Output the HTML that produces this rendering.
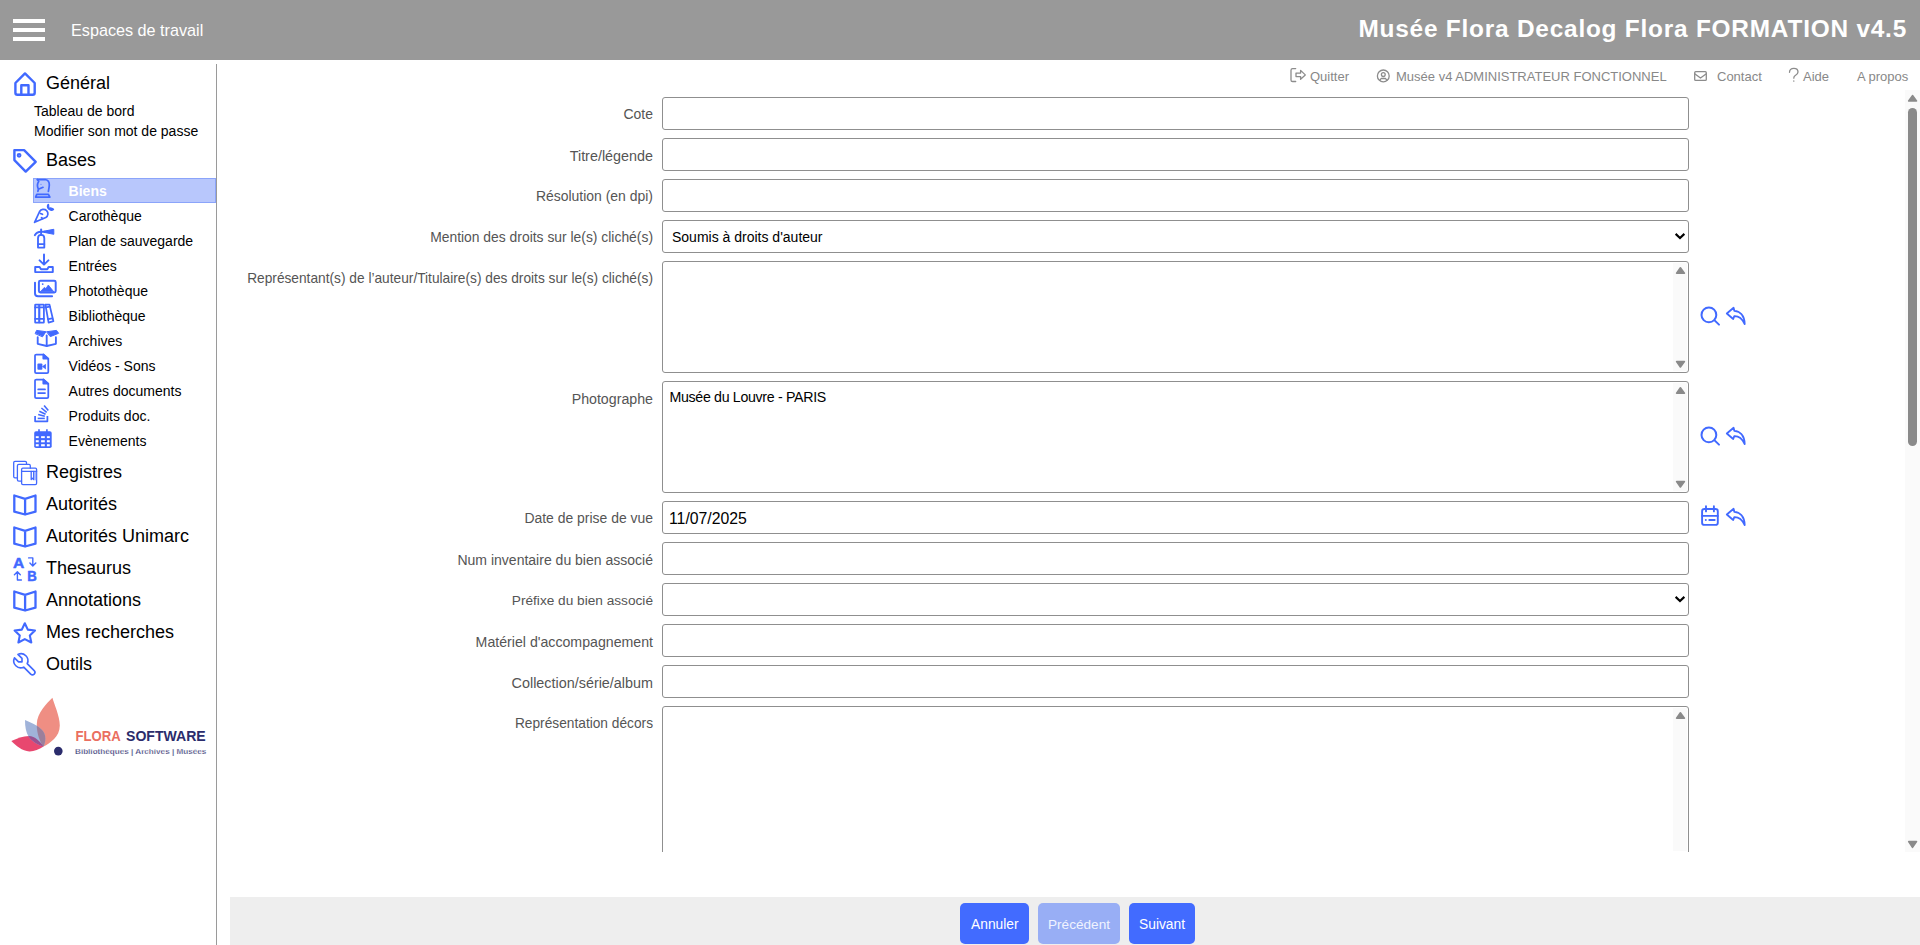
<!DOCTYPE html>
<html><head><meta charset="utf-8">
<style>
*{box-sizing:border-box}
html,body{margin:0;padding:0;width:1920px;height:945px;overflow:hidden;background:#fff;font-family:"Liberation Sans",sans-serif}
.a{position:absolute;white-space:nowrap;line-height:1}
#hdr{position:absolute;left:0;top:0;width:1920px;height:60px;background:#999}
.bar{position:absolute;left:13px;width:32px;height:4px;background:#fff}
#side{position:absolute;left:216px;top:64px;width:1px;height:881px;background:#9a9a9a}
.sec{font-size:18px;color:#000}
.sub{font-size:14px;color:#000}
.ic{position:absolute;overflow:visible}
.lbl{position:absolute;right:1267px;font-size:13.8px;color:#555;line-height:1;white-space:nowrap}
.inp{position:absolute;left:662px;width:1027px;height:33px;border:1px solid #8f8f8f;border-radius:3px;background:#fff}
.ta{height:112px}
.sb{position:absolute;right:0;top:0;width:15px;bottom:0;background:#fafafa}
.tri-up{position:absolute;left:3px;width:0;height:0;border-left:4.5px solid transparent;border-right:4.5px solid transparent;border-bottom:5px solid #8a8a8a}
.tri-dn{position:absolute;left:3px;width:0;height:0;border-left:4.5px solid transparent;border-right:4.5px solid transparent;border-top:5px solid #8a8a8a}
.val{position:absolute;font-size:14px;color:#000;line-height:1;white-space:nowrap}
.lnk{font-size:13px;color:#888}
#foot{position:absolute;left:230px;top:897px;width:1690px;height:48px;background:#eee}
.btn{position:absolute;top:903px;height:41px;border-radius:5px;background:#426bff;color:#fff;font-size:13.8px}
.btn span{position:absolute;line-height:1;white-space:nowrap}
</style></head><body>
<div id="hdr">
  <div class="bar" style="top:19px"></div>
  <div class="bar" style="top:28px"></div>
  <div class="bar" style="top:37px"></div>
  <div class="a" style="left:71px;top:22.2px;font-size:16.2px;color:#fff">Espaces de travail</div>
  <div class="a" style="left:1358.5px;top:17.2px;font-size:24.4px;letter-spacing:0.78px;font-weight:bold;color:#fff">Musée Flora Decalog Flora FORMATION v4.5</div>
</div>
<div id="side"></div>

<!-- sidebar -->
<div class="a sec" style="left:46px;top:74px">Général</div>
<div class="a sub" style="left:34px;top:104px">Tableau de bord</div>
<div class="a sub" style="left:34px;top:124px">Modifier son mot de passe</div>
<div class="a sec" style="left:46px;top:151px">Bases</div>
<div style="position:absolute;left:33px;top:178px;width:183px;height:25px;background:#b8c7fc;border:1px solid #8ba4fa"></div>
<div class="a sub" style="left:68.6px;top:184px;color:#fff;font-weight:bold">Biens</div>
<div class="a sub" style="left:68.6px;top:209px">Carothèque</div>
<div class="a sub" style="left:68.6px;top:234px">Plan de sauvegarde</div>
<div class="a sub" style="left:68.6px;top:259px">Entrées</div>
<div class="a sub" style="left:68.6px;top:284px">Photothèque</div>
<div class="a sub" style="left:68.6px;top:309px">Bibliothèque</div>
<div class="a sub" style="left:68.6px;top:334px">Archives</div>
<div class="a sub" style="left:68.6px;top:359px">Vidéos - Sons</div>
<div class="a sub" style="left:68.6px;top:384px">Autres documents</div>
<div class="a sub" style="left:68.6px;top:409px">Produits doc.</div>
<div class="a sub" style="left:68.6px;top:434px">Evènements</div>
<div class="a sec" style="left:46px;top:463px">Registres</div>
<div class="a sec" style="left:46px;top:495px">Autorités</div>
<div class="a sec" style="left:46px;top:527px">Autorités Unimarc</div>
<div class="a sec" style="left:46px;top:559px">Thesaurus</div>
<div class="a sec" style="left:46px;top:591px">Annotations</div>
<div class="a sec" style="left:46px;top:623px">Mes recherches</div>
<div class="a sec" style="left:46px;top:655px">Outils</div>

<!-- top links -->
<div class="a lnk" style="left:1310px;top:70px">Quitter</div>
<div class="a lnk" style="left:1396px;top:70px">Musée v4 ADMINISTRATEUR FONCTIONNEL</div>
<div class="a lnk" style="left:1717px;top:70px">Contact</div>
<div class="a lnk" style="left:1803px;top:70px">Aide</div>
<div class="a lnk" style="left:1857px;top:70px">A propos</div>

<!-- form -->
<div class="lbl" style="top:108px;font-size:13.95px">Cote</div>
<div class="inp" style="top:97px"></div>
<div class="lbl" style="top:149px;font-size:14.36px">Titre/légende</div>
<div class="inp" style="top:138px"></div>
<div class="lbl" style="top:190px;font-size:13.96px">Résolution (en dpi)</div>
<div class="inp" style="top:179px"></div>
<div class="lbl" style="top:231px;font-size:13.88px">Mention des droits sur le(s) cliché(s)</div>
<div class="inp" style="top:220px"></div>
<div class="val" style="left:672px;top:230px">Soumis à droits d'auteur</div>
<div class="lbl" style="top:272px;font-size:13.72px">Représentant(s) de l’auteur/Titulaire(s) des droits sur le(s) cliché(s)</div>
<div class="inp ta" style="top:261px"></div>
<div class="lbl" style="top:392px;font-size:14.21px">Photographe</div>
<div class="inp ta" style="top:381px"></div>
<div class="val" style="left:669.5px;top:390px;font-size:14.2px;letter-spacing:-0.32px">Musée du Louvre - PARIS</div>
<div class="lbl" style="top:512px;font-size:13.94px">Date de prise de vue</div>
<div class="inp" style="top:501px"></div>
<div class="val" style="left:669px;top:511px;font-size:15.8px">11/07/2025</div>
<div class="lbl" style="top:553px;font-size:14.02px">Num inventaire du bien associé</div>
<div class="inp" style="top:542px"></div>
<div class="lbl" style="top:594px;font-size:13.67px">Préfixe du bien associé</div>
<div class="inp" style="top:583px"></div>
<div class="lbl" style="top:635px;font-size:14.16px">Matériel d'accompagnement</div>
<div class="inp" style="top:624px"></div>
<div class="lbl" style="top:676px;font-size:14.39px">Collection/série/album</div>
<div class="inp" style="top:665px"></div>
<div class="lbl" style="top:717px;font-size:13.72px">Représentation décors</div>
<div class="inp ta" style="top:706px;height:200px"></div>
<div style="position:absolute;left:230px;top:852px;width:1675px;height:93px;background:#fff"></div>

<!-- page scrollbar -->
<div style="position:absolute;left:1905px;top:90px;width:15px;height:762px;background:#fafafa"></div>
<div style="position:absolute;left:1908px;top:108px;width:9px;height:338px;border-radius:4.5px;background:#8a8a8a"></div>

<!-- footer -->
<div id="foot"></div>
<div class="btn" style="left:960px;width:69px"><span style="left:11px;top:15px">Annuler</span></div>
<div class="btn" style="left:1038px;width:82px;background:#98aef5;color:#f0f3ff"><span style="left:10px;top:15px;font-size:13.6px">Précédent</span></div>
<div class="btn" style="left:1129px;width:66px"><span style="left:10px;top:15px">Suivant</span></div>

<svg id="icons" width="1920" height="945" viewBox="0 0 1920 945" style="position:absolute;left:0;top:0;pointer-events:none" fill="none" stroke="#4169ff" stroke-linecap="round" stroke-linejoin="round">
<!-- home -->
<g stroke-width="2.4">
<path d="M15.4,92.7 V83 L25,73.4 L34.7,83 V92.7 Q34.7,94.7 32.7,94.7 H17.4 Q15.4,94.7 15.4,92.7 Z"/>
<path d="M21.3,94.7 V85.3 H28.5 V94.7"/>
</g>
<!-- tag -->
<g stroke-width="2.4">
<path d="M14.4,150.1 H24.1 L35.7,161.8 L25.7,171.6 L14.4,160.1 Z"/>
<circle cx="19.1" cy="155.3" r="1.4" stroke-width="2"/>
</g>
<!-- knight -->
<g stroke-width="1.75">
<path d="M37.4,179.5 H45.2 C47.8,179.9 49.4,182.3 49.3,185 C49.2,187.5 48.7,189.5 48.4,191.3"/>
<path d="M37.4,179.5 L38.7,181.4 C37.3,183.3 37.3,186.8 38.4,189.2 L43,187.3 M38.4,189.2 L37.9,191.3"/>
<circle cx="41" cy="184.2" r="0.5" fill="#4169ff" stroke="none"/>
<path d="M36.8,194.3 H48.4 L49.9,197.1 H35.6 Z"/>
</g>
<!-- carrot -->
<g stroke-width="1.75">
<path d="M34.6,222.3 L39.6,211.5 C41,209.2 44.5,208.7 46.6,210.6 C48.6,212.6 48.3,216 45.8,217.5 Z"/>
<path d="M40.5,213.5 L42.5,214.3 M41.5,217.7 L42.7,218.5"/>
<path d="M48.3,204.6 C47.3,205.8 47.5,207.8 48.6,208.6 Z" fill="#4169ff"/>
<path d="M48.9,208.8 C50,207.8 52.4,208.3 53.3,209.3 C52.2,210.4 50,210.3 48.9,208.8 Z" fill="#4169ff"/>
</g>
<!-- extinguisher -->
<g stroke-width="1.85">
<path d="M38,247.6 V238.3 C38,236.3 39.4,234.9 41.1,234.9 C42.8,234.9 44.3,236.3 44.3,238.3 V247.6 Z"/>
<path d="M38,244.1 H44.3"/>
<path d="M41.1,229.3 V234.9"/>
<path d="M34.8,235.2 C36,233 38.5,231.7 41.1,231.7 H44.5"/>
<path d="M44.3,231.1 L53.8,229.3 V234.3 L44.3,232.4 Z" fill="#4169ff" stroke-width="1.0"/>
</g>
<!-- entrees -->
<g stroke-width="1.95">
<path d="M44,254.5 V264.5 M39.6,260.4 L44,264.6 L48.4,260.4"/>
<path d="M35.2,267 H39.6 L41,269.2 H47.3 L48.6,267 H52.8 V272.1 H35.2 Z"/>
</g>
<!-- photo -->
<g stroke-width="1.95">
<rect x="38.9" y="280.7" width="16.8" height="11.8" rx="1.5"/>
<path d="M35,282.6 V293.3 C35,295 36.3,296.2 38,296.2 H52.1"/>
<circle cx="42.7" cy="284.1" r="0.9" fill="#4169ff" stroke="none"/>
<path d="M40.3,291.8 L44.3,287.4 L45.9,288.6 L48.3,285 L53.8,291.8 Z" fill="#4169ff" stroke-width="0.8"/>
</g>
<!-- books -->
<g stroke-width="1.75">
<rect x="35.1" y="304.6" width="4.2" height="18.1" rx="0.5"/>
<rect x="39.3" y="304.6" width="4.6" height="18.1" rx="0.5"/>
<path d="M35.1,307.4 H43.9 M35.1,318.8 H43.9"/>
<path d="M45.4,304.6 H49.5 L53.4,321.2 L48.6,322.6 Z"/>
<path d="M45.9,307.3 L49.8,306.6 M48.2,319.2 L52.4,318.3"/>
</g>
<!-- archives box -->
<g stroke-width="1.85">
<path d="M35.3,333.3 L36.6,330.4 L45.9,331.7 L42.7,336.5 Z" fill="#4169ff" stroke-width="1.0"/>
<path d="M46.9,331.7 L56.5,330.4 L58.6,333.3 L50.6,336.5 Z" fill="#4169ff" stroke-width="1.0"/>
<path d="M37.7,337.2 V343.8 L46.7,346 L55.9,343.8 V337.2"/>
<path d="M46.7,335.4 V346"/>
</g>
<!-- video file -->
<g stroke-width="1.75">
<path d="M35,355.6 C35,354.8 35.6,354.5 36.3,354.5 H43.3 L48.3,359 V372 C48.3,372.7 47.7,373 47,373 H36.3 C35.6,373 35,372.7 35,372 Z"/>
<path d="M43.3,354.5 V358.6 H48.3 Z" fill="#4169ff"/>
<rect x="37.4" y="363.6" width="5" height="6.1" rx="1" fill="#4169ff" stroke="none"/>
<path d="M42,366.6 L45.9,363.8 V369.6 Z" fill="#4169ff" stroke="none"/>
</g>
<!-- doc file -->
<g stroke-width="1.75">
<path d="M35,380.6 C35,379.8 35.6,379.5 36.3,379.5 H43.3 L48.3,384 V397 C48.3,397.7 47.7,398 47,398 H36.3 C35.6,398 35,397.7 35,397 Z"/>
<path d="M43.3,379.5 V383.6 H48.3 Z" fill="#4169ff"/>
<path d="M38.2,389.4 H45 M38.2,393.1 H45"/>
</g>
<!-- stack -->
<g stroke-width="1.55" stroke-linecap="butt">
<path d="M35.1,416 V421.3 H47.4 V416" stroke-width="1.75"/>
<path d="M37.7,418.4 H44.8"/>
<path d="M38.2,414.6 L44.8,416.3"/>
<path d="M39.3,411.2 L45.6,414.3"/>
<path d="M41.4,408 L46.7,412.3"/>
<path d="M44.1,405.4 L48.3,410.6"/>
</g>
<!-- calendar -->
<g>
<rect x="34.2" y="431.2" width="17.5" height="16.9" rx="1.8" fill="#4169ff" stroke="none"/>
<path d="M39,429.2 V432 M46.9,429.2 V432" stroke-width="1.65" stroke-linecap="butt"/>
<g fill="#fff" stroke="none">
<rect x="35.8" y="436.2" width="2.9" height="1.9"/><rect x="41.1" y="436.2" width="3.7" height="1.9"/><rect x="46.9" y="436.2" width="2.9" height="1.9"/>
<rect x="35.8" y="440.2" width="2.9" height="2.1"/><rect x="41.1" y="440.2" width="3.7" height="2.1"/><rect x="46.9" y="440.2" width="2.9" height="2.1"/>
<rect x="35.8" y="444.2" width="2.9" height="2.1"/><rect x="41.1" y="444.2" width="3.7" height="2.1"/><rect x="46.9" y="444.2" width="2.9" height="2.1"/>
</g>
</g>
<!-- registres -->
<g stroke-width="1.3">
<path d="M17.4,477.9 H15 C14.2,477.9 13.7,477.3 13.7,476.5 V462.6 C13.7,461.8 14.2,461.3 15,461.3 H25.2 C26,461.3 26.5,461.8 26.5,462.6 V464.4"/>
<path d="M21.6,481.1 H18.8 C18,481.1 17.4,480.5 17.4,479.7 V465.8 C17.4,465 18,464.4 18.8,464.4 H29 C29.8,464.4 30.3,465 30.3,465.8 V468.2"/>
<rect x="21.6" y="468.2" width="15" height="16.4" rx="1.3"/>
<path d="M21.6,471.4 H36.6"/>
<path d="M31.2,471.4 V479.6 L32.4,478.2 L33.7,479.6 V471.4" />
<rect x="34.2" y="471.8" width="2" height="8.5" fill="#9fb3ff" stroke="none"/>
</g>
<!-- books open -->
<g stroke-width="2.3">
<path d="M14.3,495.5 L25.1,498.8 L35.5,495.5 V511.7 L25.1,514.5 L14.3,511.7 Z M25.1,498.8 V514.5"/>
<path d="M14.3,527.5 L25.1,530.8 L35.5,527.5 V543.7 L25.1,546.5 L14.3,543.7 Z M25.1,530.8 V546.5"/>
<path d="M14.3,591.5 L25.1,594.8 L35.5,591.5 V607.7 L25.1,610.5 L14.3,607.7 Z M25.1,594.8 V610.5"/>
</g>
<!-- thesaurus -->
<g>
<text x="12.9" y="567.7" font-family="Liberation Sans" font-weight="bold" font-size="14.6" fill="#4169ff" stroke="#4169ff" stroke-width="0.5" textLength="11.3" lengthAdjust="spacingAndGlyphs">A</text>
<text x="27.3" y="580.5" font-family="Liberation Sans" font-weight="bold" font-size="13.8" fill="#4169ff" stroke="#4169ff" stroke-width="0.5" textLength="9.5" lengthAdjust="spacingAndGlyphs">B</text>
<path d="M28.6,557.9 H32.8 V565.6 M29.9,563 L32.8,565.9 L35.8,563" stroke-width="1.4"/>
<path d="M21.4,580 H17.4 V572 M14.4,574.7 L17.4,571.8 L20.3,574.7" stroke-width="1.4"/>
</g>
<!-- star -->
<path stroke-width="2.1" d="M24.8,623.3 L27.8,629.6 L35,630.5 L29.8,635.4 L31.3,642.5 L24.8,639.1 L18.4,642.5 L19.8,635.4 L14.6,630.5 L21.8,629.6 Z"/>
<!-- wrench -->
<g transform="translate(10.4,650.3) scale(1.16)"><path stroke-width="1.4" d="M7 10h3v-3l-3.5 -3.5a6 6 0 0 1 8 8l6 6a2 2 0 0 1 -3 3l-6 -6a6 6 0 0 1 -8 -8l3.5 3.5"/></g>
<!-- right icons -->
<g stroke-width="2">
<circle cx="1708.9" cy="314.9" r="7.4"/><path d="M1714.6,320.4 L1719,324.6"/>
<path d="M1726.8,313.5 L1733.6,307.8 L1734.3,310.8 C1739.5,311.2 1744.5,314.8 1744.7,324 C1742.2,318.8 1738.5,316 1734.3,316.2 L1733.2,319 Z" stroke-width="1.8"/>
<circle cx="1708.9" cy="434.9" r="7.4"/><path d="M1714.6,440.4 L1719,444.6"/>
<path d="M1726.8,433.5 L1733.6,427.8 L1734.3,430.8 C1739.5,431.2 1744.5,434.8 1744.7,444 C1742.2,438.8 1738.5,436 1734.3,436.2 L1733.2,439 Z" stroke-width="1.8"/>
<path d="M1726.8,514.5 L1733.6,508.8 L1734.3,511.8 C1739.5,512.2 1744.5,515.8 1744.7,525 C1742.2,519.8 1738.5,517 1734.3,517.2 L1733.2,520 Z" stroke-width="1.8"/>
<rect x="1702.1" y="509" width="15.7" height="15.9" rx="2.2" stroke-width="1.9"/>
<path d="M1706,506.2 V511.4 M1713.9,506.2 V511.4 M1702.1,515.9 H1717.8 M1709.3,520 H1714.7" stroke-width="1.9"/>
<circle cx="1705.8" cy="520" r="1" fill="#4169ff" stroke="none"/>
</g>
<!-- top link icons -->
<g stroke="#8c8c8c" stroke-width="1.3">
<path d="M1295.7,68.6 H1292.6 C1291.7,68.6 1291,69.3 1291,70.2 V79.9 C1291,80.8 1291.7,81.5 1292.6,81.5 H1295.7"/>
<path d="M1296,73.1 H1300.6 V70.4 L1305.3,74.9 L1300.6,79.2 V76.6 H1296 Z"/>
<path d="M1789.5,72.3 C1789.6,69.8 1791.5,68.4 1793.9,68.4 C1796.3,68.4 1798,69.9 1798,72 C1798,74.2 1796.2,75 1794.9,75.8 C1794,76.4 1793.8,77.2 1793.8,78.2 M1793.8,81 V81.2"/>
<circle cx="1383.3" cy="75.9" r="5.9"/>
<circle cx="1383.3" cy="74.6" r="1.9"/>
<path d="M1379.8,80.4 L1381.1,78.5 H1385.6 L1386.9,80.4"/>
<rect x="1694.7" y="71.7" width="11.6" height="8.7" rx="1"/>
<path d="M1695,73.9 L1700.5,78 L1706,73.9"/>
</g>
</svg>


<svg width="1920" height="945" viewBox="0 0 1920 945" style="position:absolute;left:0;top:0;pointer-events:none">
<g fill="#fafafa">
<rect x="1673" y="263" width="14" height="108"/>
<rect x="1673" y="383" width="14" height="108"/>
<rect x="1673" y="708" width="14" height="143"/>
</g>
<g fill="#8a8a8a" stroke="#8a8a8a" stroke-width="1.6" stroke-linejoin="round">
<path d="M1680.4,267.8 L1676.6,273.2 H1684.4 Z"/>
<path d="M1676.6,361.6 H1684.4 L1680.4,367 Z"/>
<path d="M1680.4,387.8 L1676.6,393.2 H1684.4 Z"/>
<path d="M1676.6,481.6 H1684.4 L1680.4,487 Z"/>
<path d="M1680.4,712.8 L1676.6,718.2 H1684.4 Z"/>
<path d="M1912.5,95.6 L1908.7,101 H1916.5 Z"/>
<path d="M1908.7,841.6 H1916.5 L1912.5,847.4 Z"/>
</g>
<g fill="none" stroke="#000" stroke-width="2.1" stroke-linecap="square">
<path d="M1676.4,234.6 L1680,238 L1683.6,234.6"/>
<path d="M1676.4,597.6 L1680,601 L1683.6,597.6"/>
</g>
<!-- logo -->
<defs>
<clipPath id="cpS"><path d="M52.4,697.8 C47,703 37,713 36.8,724 C36.6,734 40,742 43.5,746.6 C50,743 59.8,737 59.8,725.5 C59.8,716 54,704 52.4,697.8 Z"/></clipPath>
<clipPath id="cpP"><path d="M11.3,741.1 C17,738.5 23,736 29,736 C35,736.5 40,741 43.5,746.6 C39,749.5 34,751.5 29.4,751.4 C22,751 16,746 11.3,741.1 Z"/></clipPath>
</defs>
<path fill="#ef8e83" d="M52.4,697.8 C47,703 37,713 36.8,724 C36.6,734 40,742 43.5,746.6 C50,743 59.8,737 59.8,725.5 C59.8,716 54,704 52.4,697.8 Z"/>
<path fill="#e8476f" d="M11.3,741.1 C17,738.5 23,736 29,736 C35,736.5 40,741 43.5,746.6 C39,749.5 34,751.5 29.4,751.4 C22,751 16,746 11.3,741.1 Z"/>
<path fill="#a0b3d9" d="M25,720 C31,722.5 37,725 41,729 C46,733 46.5,740 43.5,746.6 C37,744.5 31.5,741 28.5,736.5 C26,732 25,727 25,720 Z"/>
<path fill="#9c7f9b" clip-path="url(#cpS)" d="M25,720 C31,722.5 37,725 41,729 C46,733 46.5,740 43.5,746.6 C37,744.5 31.5,741 28.5,736.5 C26,732 25,727 25,720 Z"/>
<path fill="#9a5190" clip-path="url(#cpP)" d="M25,720 C31,722.5 37,725 41,729 C46,733 46.5,740 43.5,746.6 C37,744.5 31.5,741 28.5,736.5 C26,732 25,727 25,720 Z"/>
<circle cx="58.3" cy="751.1" r="4.3" fill="#2b2c6c"/>
<text x="75.5" y="740.5" font-family="Liberation Sans" font-weight="bold" font-size="14.2" fill="#ea6e60" textLength="45.3" lengthAdjust="spacingAndGlyphs">FLORA</text>
<text x="126" y="740.5" font-family="Liberation Sans" font-weight="bold" font-size="14.2" fill="#2b2c6c" textLength="79.7" lengthAdjust="spacingAndGlyphs">SOFTWARE</text>
<text x="75" y="754.3" font-family="Liberation Sans" font-weight="bold" font-size="7.8" stroke="#fff" stroke-width="0.25" fill="#2b2c6c" textLength="131.3" lengthAdjust="spacingAndGlyphs">Bibliothèques | Archives | Musées</text>
</svg>

</body></html>
